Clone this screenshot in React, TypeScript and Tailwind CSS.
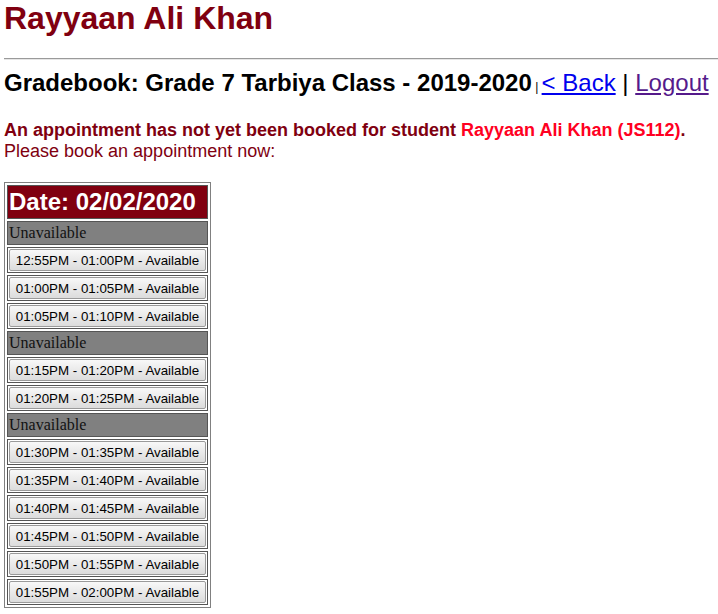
const SLOTS: (string | null)[] = [
  null,
  "12:55PM - 01:00PM",
  "01:00PM - 01:05PM",
  "01:05PM - 01:10PM",
  null,
  "01:15PM - 01:20PM",
  "01:20PM - 01:25PM",
  null,
  "01:30PM - 01:35PM",
  "01:35PM - 01:40PM",
  "01:40PM - 01:45PM",
  "01:45PM - 01:50PM",
  "01:50PM - 01:55PM",
  "01:55PM - 02:00PM",
];

const App = () => {
  return (
    <div className="min-h-screen bg-white pl-[4px] font-['Liberation_Sans',Arial,sans-serif] text-black">
      {/* ── Student name ── */}
      <h1 className="text-[32px] font-bold leading-[37px] text-[#800010]">Rayyaan Ali Khan</h1>
      <hr className="mt-[21px] h-0 border-0 border-t border-b border-t-[#9a9a9a] border-b-[#e6e6e6]" />

      {/* ── Gradebook title + nav ── */}
      <div className="mt-[9px] text-[24px] leading-[28px]">
        <span className="font-bold">Gradebook: Grade 7 Tarbiya Class - 2019-2020</span>
        <span className="text-[12px] text-black"> | </span>
        <a href="#" className="text-[#0000ee] underline">&lt; Back</a>
        {" | "}
        <a href="#" className="text-[#551a8b] underline">Logout</a>
      </div>

      {/* ── Notice ── */}
      <div className="mt-[19px] text-[18px] leading-[21px] text-[#800010]">
        <p className="font-bold">
          An appointment has not yet been booked for student{" "}
          <span className="text-[#ff0022]">Rayyaan Ali Khan (JS112)</span>.
        </p>
        <p>Please book an appointment now:</p>
      </div>

      {/* ── Slots table ── */}
      <div className="mt-[20px] flex w-[207px] flex-col gap-[2px] border border-[#808080] p-[2px]">
        <div className="flex h-[34px] items-center border border-[#555] bg-[#800010] px-[1px] text-[24px] font-bold leading-[28px] text-white">
          Date: 02/02/2020
        </div>
        {SLOTS.map((slot, i) =>
          slot === null ? (
            <div
              key={i}
              className="flex h-[24px] items-center border border-[#555] bg-[#808080] px-[1px] font-['Liberation_Serif',serif] text-[16px] leading-[18px] text-[#111]"
            >
              Unavailable
            </div>
          ) : (
            <div key={i} className="flex h-[26px] border border-[#555] p-[1px]">
              <button className="h-[22px] w-full rounded-[2px] border border-[#9a9a9a] bg-gradient-to-b from-[#f8f8f8] to-[#dcdcdc] text-[13.33px] leading-[15px] text-black">
                {slot} - Available
              </button>
            </div>
          )
        )}
      </div>
    </div>
  );
};

export default App;
